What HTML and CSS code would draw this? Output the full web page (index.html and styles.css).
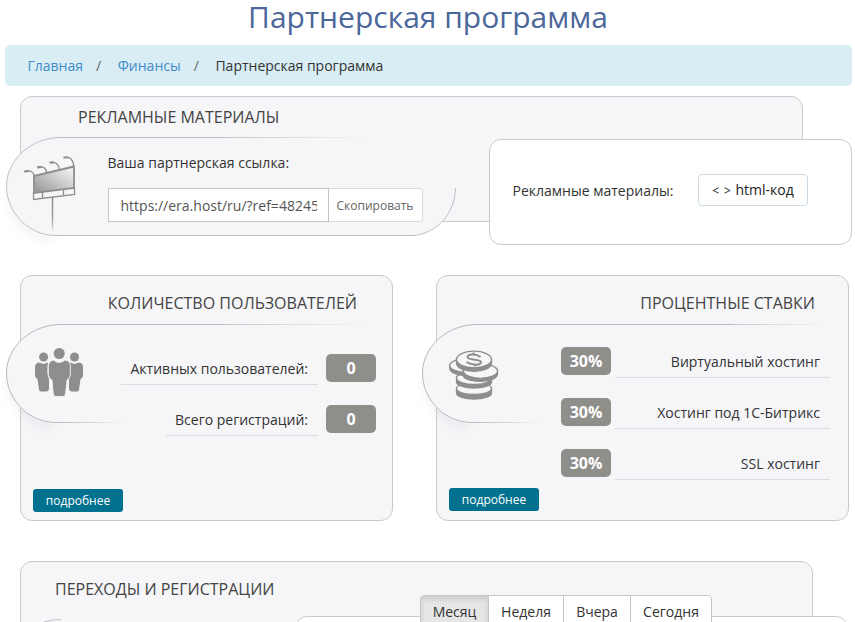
FILE: index.html
```html
<!DOCTYPE html>
<html lang="ru">
<head>
<meta charset="utf-8">
<title>Партнерская программа</title>
<link rel="stylesheet" href="styles.css">
</head>
<body>
<h1 class="title"><span>Партнерская программа</span></h1>
<nav class="crumbs"><a>Главная</a><i>/</i><a>Финансы</a><i>/</i><span>Партнерская программа</span></nav>

<main>
<section class="card promo">
  <svg class="ornament" width="460" height="116" viewBox="0 0 460 116">
    <defs>
      <linearGradient id="fade" gradientUnits="userSpaceOnUse" x1="220" y1="0" x2="362" y2="0"><stop offset="0" stop-color="#c5c6c9"/><stop offset="1" stop-color="#c5c6c9" stop-opacity="0"/></linearGradient>
      <linearGradient id="board" x1="0" y1="1" x2="1" y2="0"><stop offset="0" stop-color="#929292"/><stop offset=".9" stop-color="#f0f0f0"/></linearGradient>
      <linearGradient id="pole" x1="0" y1="0" x2="0" y2="1"><stop offset="0" stop-color="#858585"/><stop offset=".6" stop-color="#999"/><stop offset="1" stop-color="#999" stop-opacity="0"/></linearGradient>
      <filter id="soft" x="-30%" y="-30%" width="160%" height="160%"><feGaussianBlur stdDeviation="4"/></filter>
    </defs>
    <path d="M4 60C8 86 25 102 46 102" fill="none" stroke="#b0b0b5" stroke-opacity=".25" stroke-width="5" filter="url(#soft)"/>
    <path d="M55.500 1.500C25 1.500 .5 24 .5 50C.5 76 22 99.500 50 99.500H408C431 97 449 78 449.500 52V1.500z" fill="#f6f6f9"/>
    <path d="M220 1.500H55C25 1.500 .5 24 .5 50C.5 76 22 99.500 50 99.500H408C431 97 449 78 449.500 52" fill="none" stroke="#c0c1c5"/>
    <path d="M219 1H362V2H219z" fill="url(#fade)"/>
    <g fill="none" stroke="#8e8e8c" stroke-width="1.300">
      <path d="M28 40L68 30.500V52L28 57z" fill="url(#board)" stroke-width="1.800"/>
      <path d="M27.500 56V63.500L68.500 58.500V51M36.500 56V62.500M57.500 53V60"/>
      <path d="M28.500 40C27 35.500 24 34 20 35.500M41 37C40 32 37 30 32 31M53.500 34C53 29 50 25.500 45 26.500M67.500 31C68 25 64 20 59 21.500"/>
      <path d="M18 35.500L23 35M31 31.500L35.500 31M43.500 26.500L48 26.500M57.500 21.500L62 21.500" stroke-width="2.200"/>
    </g>
    <path d="M45.800 61H47.200V97H45.800z" fill="url(#pole)"/>
  </svg>
  <h2>Рекламные материалы</h2>
  <div class="ref">
    <label><span>Ваша партнерская ссылка:</span></label>
    <div class="copy"><div class="field"><div>https://era.host/ru/?ref=48245</div></div><button>Скопировать</button></div>
  </div>
  <div class="materials"><span>Рекламные материалы:</span><button><small>&lt; &gt;</small> html-код</button></div>
</section>

<div class="row">
  <section class="card users">
    <svg class="ornament" width="370" height="116" viewBox="0 0 370 116">
      <path d="M4 60C8 86 25 102 46 102" fill="none" stroke="#b0b0b5" stroke-opacity=".25" stroke-width="5" filter="url(#soft)"/>
      <path d="M120 1.500H55C25 1.500 .5 24 .5 50C.5 76 22 99.500 50 99.500H120z" fill="#f6f6f9"/>
      <path d="M220 1.500H55C25 1.500 .5 24 .5 50C.5 76 22 99.500 50 99.500" fill="none" stroke="#b9babd"/>
      <path d="M219 1H362V2H219z" fill="url(#fade)"/>
      <path d="M50 99H120V100H50z" fill="url(#fadeshort)"/>
      <defs><linearGradient id="fadeshort"><stop offset="0" stop-color="#b9babd"/><stop offset="1" stop-color="#b9babd" stop-opacity="0"/></linearGradient></defs>
      <g fill="#8e8e8c">
        <circle cx="37.600" cy="34" r="4.500"/><circle cx="68.500" cy="34" r="4.500"/><circle cx="53.200" cy="30.500" r="5.500"/>
        <path d="M33 39.500L37.500 41L42 39.500C41 46 41 52 43 56V66Q42.500 68.500 40 68.500H35Q33 68.500 33 66.500L31.500 56Q29 55 29 52V44Q29 40 33 39.500z"/>
        <path d="M73 39.500L68.500 41L64 39.500C65 46 65 52 63 56V66Q63.500 68.500 66 68.500H71Q73 68.500 73 66.500L74.500 56Q77 55 77 52V44Q77 40 73 39.500z"/>
        <path d="M47.500 37Q53 42 59 37Q64 38 64.300 42V52Q63.500 56 61 57L59.500 71Q59.300 73.500 57 73.500H50Q47.500 73.500 47.300 71L46 57Q43 56 42.400 52V42Q43 38 47.500 37z" stroke="#f6f6f9" stroke-width=".8"/>
      </g>
    </svg>
    <h2>Количество пользователей</h2>
    <dl>
      <div><dt>Активных пользователей:</dt><dd>0</dd></div>
      <div><dt>Всего регистраций:</dt><dd>0</dd></div>
    </dl>
    <button class="more">подробнее</button>
  </section>

  <section class="card rates">
    <svg class="ornament" width="410" height="116" viewBox="0 0 410 116">
      <defs><linearGradient id="faderate" gradientUnits="userSpaceOnUse" x1="310" y1="0" x2="405" y2="0"><stop offset="0" stop-color="#c5c6c9"/><stop offset="1" stop-color="#c5c6c9" stop-opacity="0"/></linearGradient></defs>
      <path d="M4 60C8 86 25 102 46 102" fill="none" stroke="#b0b0b5" stroke-opacity=".25" stroke-width="5" filter="url(#soft)"/>
      <path d="M120 1.500H55C25 1.500 .5 24 .5 50C.5 76 22 99.500 50 99.500H120z" fill="#f6f6f9"/>
      <path d="M310 1.500H55C25 1.500 .5 24 .5 50C.5 76 22 99.500 50 99.500" fill="none" stroke="#b9babd"/>
      <path d="M309 1H405V2H309z" fill="url(#faderate)"/>
      <path d="M50 99H120V100H50z" fill="url(#fadeshort)"/>
      <g stroke="#8e8e8c" stroke-width="1.300">
        <path d="M34.500 65V70C34.500 78 69.500 78 69.500 70V65z" fill="#8e8e8c"/><ellipse cx="52" cy="65.500" rx="17.500" ry="6" fill="#f6f6f9"/>
        <path d="M34.500 54V59C34.500 67 69.500 67 69.500 59V54z" fill="#8e8e8c"/><ellipse cx="52" cy="55" rx="17.500" ry="6.500" fill="#f6f6f9"/>
        <path d="M27.700 42V45C27.700 55 62 55 62 45V42z" fill="#8e8e8c"/><ellipse cx="45" cy="42.500" rx="17.300" ry="7" fill="#f6f6f9"/>
        <path d="M41 48V52C43 61 75.500 60 75.500 51V47z" fill="#8e8e8c"/><ellipse cx="58.500" cy="48" rx="17" ry="7.300" fill="#f6f6f9"/>
        <path d="M34.500 36V40C34.500 51 69.500 51 69.500 40V36z" fill="#8e8e8c"/><ellipse cx="52" cy="36.500" rx="17.500" ry="8.300" fill="#f6f6f9"/>
        <path d="M58.500 34C54 30.500 45.500 31 45.500 34C45.500 37.500 59 36 59 39C59 42.500 50 42.500 44.500 39M51.500 29.500L52 32M52.500 41L53 43.500" fill="none" stroke-width="2"/>
      </g>
    </svg>
    <h2>Процентные ставки</h2>
    <dl>
      <div><dd>30%</dd><dt>Виртуальный хостинг</dt></div>
      <div><dd>30%</dd><dt>Хостинг под 1С-Битрикс</dt></div>
      <div><dd>30%</dd><dt>SSL хостинг</dt></div>
    </dl>
    <button class="more">подробнее</button>
  </section>
</div>

<section class="card visits">
  <svg class="ornament" width="60" height="40" viewBox="0 0 60 40"><path d="M55 1.500C25 1.500 .5 24 .5 50" fill="none" stroke="#c0c1c5"/></svg>
  <h2>Переходы и регистрации</h2>
  <div class="chart"></div>
  <div class="tabs"><button class="active">Месяц</button><button>Неделя</button><button>Вчера</button><button>Сегодня</button></div>
</section>
</main>
</body>
</html>
```
FILE: styles.css
```css
* { box-sizing: border-box; }
body { margin: 0; height: 622px; overflow: hidden; background: #fff; color: #333; font: 14px/20px "Open Sans", sans-serif; }
button { margin: 0; padding: 0; font: inherit; color: inherit; background: #fff; }
h1, h2, dl, dd { margin: 0; }
.title { height: 45px; padding: 0 0 0 1px; text-align: center; font-size: 30px; line-height: 33px; font-weight: 400; color: #4c6799; }
.crumbs { display: flex; height: 41px; margin: 0 3px 0 5px; padding: 11px 22.500px; background: #d9edf5; border-radius: 5px; }
.crumbs a { color: #428bca; }
.crumbs i { width: 34.700px; padding-left: 13px; font-style: normal; color: #666; }
main { padding: 10px 6px 0 20px; }
.card { position: relative; background: #f6f6f9; border: 1px solid #c9cacd; border-radius: 12px; }
.ornament { position: absolute; left: -15px; overflow: visible; }
h2 { position: relative; font-size: 16px; line-height: 22px; font-weight: 400; text-transform: uppercase; color: #444; white-space: nowrap; }

.promo { width: 783px; height: 126px; padding: 9px 0 0 57px; }
.promo .ornament { top: 39px; }
.ref { position: relative; width: 315px; margin: 25px 0 0 30px; }
.ref label { display: block; height: 35px; }
.ref label span { margin-left: -.5px; }
.copy { display: flex; height: 34px; }
.field { width: 221px; padding: 7px 12px 5px 11.500px; background: #fff; border: 1px solid #c3c4ca; color: #555; white-space: nowrap; }
.field div { overflow: hidden; width: 196px; }
.copy button { width: 94px; padding: 2px 1px 0 0; border: 1px solid #d9dadd; border-left: 0; border-radius: 0 4px 4px 0; font-size: 12px; color: #666; }
.materials { position: absolute; left: 468px; top: 42px; display: flex; align-items: flex-start; width: 363px; height: 106px; padding: 34px 0 0 22.500px; background: #fff; border: 1px solid #c9cacd; border-radius: 12px; }
.materials span { width: 185.500px; padding-top: 7px; }
.materials button { width: 110px; height: 32px; border: 1px solid #ccdbe3; border-radius: 4px; color: #222; }
.materials small { font-size: 12px; letter-spacing: .9px; }

.row { display: flex; gap: 43px; margin-top: 53px; }
.users, .rates { display: flex; flex-direction: column; height: 246px; padding: 16px 16px 0 12px; }
.users { width: 373px; }
.rates { width: 413px; padding-right: 18px; }
.users .ornament, .rates .ornament { top: 47px; }
.users h2 { align-self: flex-end; margin-right: 19px; }
.rates h2 { align-self: flex-end; margin-right: 15px; }
dl { position: relative; display: flex; flex-direction: column; gap: 23px; margin-top: 40px; align-items: flex-end; }
.rates dl { margin-top: 33px; }
dl div { display: flex; height: 28px; }
dt { height: 31px; padding: 5px 9.500px 0; border-bottom: 1px solid #dcdde0; white-space: nowrap; }
dd { width: 50px; height: 28px; margin-left: 8.500px; border-radius: 5px; background: #8e8e8b; color: #fff; font-size: 16px; line-height: 28px; font-weight: 700; text-align: center; }
.rates dd { margin: 0 4px 0 0; }
.rates dt { width: 215px; padding-right: 10px; text-align: right; }
.more { width: 90px; height: 23px; margin: auto 0 8px; border: 0; border-radius: 3px; background: #00718f; color: #fff; font-size: 12px; line-height: 23px; }
.rates .more { margin-bottom: 9px; }

.visits { width: 793px; height: 200px; margin-top: 40px; padding: 16px 0 0 34px; }
.visits .ornament { top: 56px; }
.visits .ornament path { stroke-dasharray: 20 200; }
.chart { position: absolute; left: 274px; top: 54px; width: 553px; height: 140px; background: #fff; border: 1px solid #c9cacd; border-radius: 12px; }
.tabs { position: absolute; left: 399px; top: 33px; display: flex; width: 292px; height: 34px; border: 1px solid #c5c6c9; border-radius: 4px; overflow: hidden; }
.tabs button { flex: 0 0 75px; border: 0; border-right: 1px solid #c5c6c9; color: #333; }
.tabs button:nth-child(1) { flex-basis: 68px; }
.tabs button:nth-child(3) { flex-basis: 67px; }
.tabs button:last-child { flex: 1; border-right: 0; }
.tabs .active { background: #e6e6e6; box-shadow: inset 0 3px 5px rgba(0,0,0,.125); }
```
